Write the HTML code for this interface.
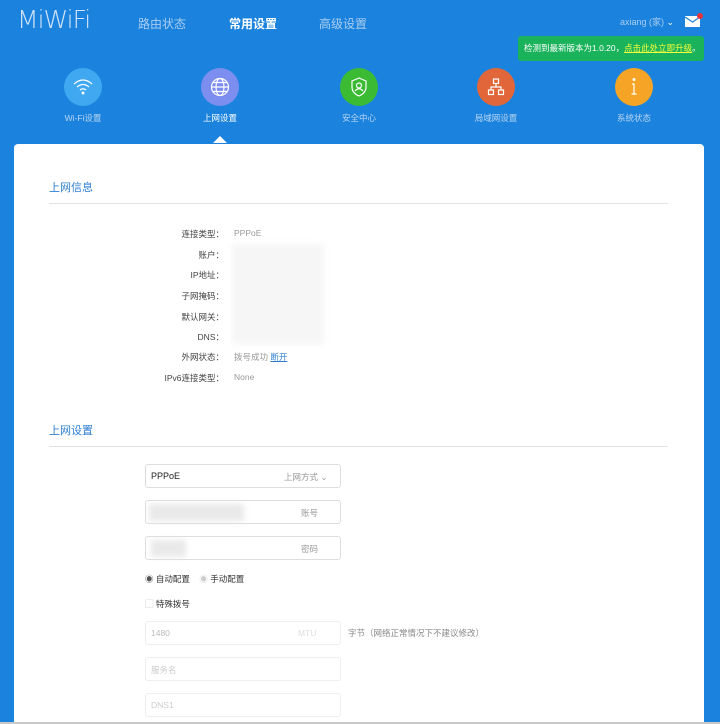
<!DOCTYPE html>
<html><head><meta charset="utf-8"><style>
*{margin:0;padding:0;box-sizing:border-box}
html,body{width:720px;height:724px;overflow:hidden}
body{background:#1b83de;font-family:"Liberation Sans","Noto Sans CJK SC",sans-serif;position:relative;font-size:9px}
.a{position:absolute;white-space:nowrap}
.logo{left:17px;top:5px;font-size:25px;color:#cfe3f7;letter-spacing:-1px;font-family:"DejaVu Sans","Liberation Sans",sans-serif;font-weight:200}
.nav{top:15px;font-size:12px;color:#a9cdef}
.ic{width:38px;height:38px;border-radius:50%;top:68px}
.lb{top:112px;font-size:8.5px;color:#b8d6f3;width:100px;text-align:center}
.card{left:14px;top:144px;width:690px;height:578px;background:#fff;border-radius:4px 4px 0 0}
.h{font-size:11px;color:#2f7fd0}
.ln{height:1px;background:#e2e2e2;left:49px;width:619px}
.k{width:100px;text-align:right;left:124px;font-size:8.5px;color:#444}
.v{left:234px;font-size:8.5px;color:#999}
.blur{background:#f6f6f6;filter:blur(3px)}
.in{left:145px;width:196px;height:24px;border:1px solid #ddd;border-radius:3px;background:#fff}
.in2{border-color:#eee}
</style></head><body>
<div class="a logo">MiWiFi</div>
<div class="a nav" style="left:138px">路由状态</div>
<div class="a nav" style="left:229px;color:#fff;font-weight:bold">常用设置</div>
<div class="a nav" style="left:319px">高级设置</div>
<div class="a" style="left:620px;top:15px;font-size:9px;color:#a9cdef">axiang (家) <span style="color:#fff">⌄</span></div>
<svg class="a" style="left:684px;top:12px" width="20" height="16"><rect x="1" y="4" width="15" height="11" fill="#fff"/><path d="M1 5 L8.5 10 L16 5" stroke="#1b83de" fill="none" stroke-width="1.2"/><circle cx="16" cy="4" r="3" fill="#e5323a"/></svg>
<div class="a" style="left:518px;top:36px;width:186px;height:25px;background:#1ab35b;border-radius:3px;color:#fff;font-size:8.5px;line-height:25px;padding-left:6px">检测到最新版本为1.0.20，<span style="color:#f6ff3b;text-decoration:underline">点击此处立即升级</span>。</div>
<div class="a" style="left:688px;top:31px;width:0;height:0;border:5px solid transparent;border-bottom-color:#1ab35b"></div>

<div class="a ic" style="left:64px;background:#3fa8f0"></div>
<svg class="a" style="left:72px;top:77px" width="22" height="20" fill="none" stroke="#fff" stroke-width="1.3"><path d="M2 7 Q11 -1 20 7"/><path d="M5 10 Q11 5 17 10"/><path d="M8 13 Q11 10.5 14 13"/><circle cx="11" cy="16" r=".8" fill="#fff"/></svg>
<div class="a ic" style="left:201px;background:#7c8ef0"></div>
<svg class="a" style="left:209px;top:76px" width="22" height="22" fill="none" stroke="#fff" stroke-width="1.2"><circle cx="11" cy="11" r="8.5"/><ellipse cx="11" cy="11" rx="4" ry="8.5"/><path d="M2.5 11H19.5M4 6.5H18M4 15.5H18"/></svg>
<div class="a ic" style="left:340px;background:#3bbb34"></div>
<svg class="a" style="left:349px;top:76px" width="20" height="22" fill="none" stroke="#fff" stroke-width="1.2"><path d="M10 2 L17 5 V11 Q17 17 10 20 Q3 17 3 11 V5 Z"/><circle cx="10" cy="9.5" r="2.5"/><path d="M6 15 Q10 10.5 14 15"/></svg>
<div class="a ic" style="left:477px;background:#e1673a"></div>
<svg class="a" style="left:486px;top:77px" width="20" height="20" fill="none" stroke="#fff" stroke-width="1.2"><rect x="7.5" y="2" width="5" height="4.5"/><rect x="2.5" y="13" width="5" height="4.5"/><rect x="12.5" y="13" width="5" height="4.5"/><path d="M10 6.5V10M5 13V10H15V13"/></svg>
<div class="a ic" style="left:615px;background:#f5a425"></div>
<svg class="a" style="left:624px;top:76px" width="20" height="22" fill="none" stroke="#fff" stroke-width="1.2"><circle cx="10" cy="3.5" r=".9" fill="#fff"/><path d="M8 8H10V18M7.5 18H12.5"/></svg>

<div class="a lb" style="left:33px">Wi-Fi设置</div>
<div class="a lb" style="left:170px;color:#fff">上网设置</div>
<div class="a lb" style="left:309px">安全中心</div>
<div class="a lb" style="left:446px">局域网设置</div>
<div class="a lb" style="left:584px">系统状态</div>

<div class="a card"></div>
<div class="a" style="left:213px;top:136px;border:7px solid transparent;border-bottom-color:#fff;border-top:0"></div>

<div class="a h" style="left:49px;top:179px">上网信息</div>
<div class="a ln" style="top:203px"></div>
<div class="a k" style="top:228px">连接类型：</div><div class="a v" style="top:228px">PPPoE</div>
<div class="a k" style="top:249px">账户：</div>
<div class="a k" style="top:269px">IP地址：</div>
<div class="a k" style="top:290px">子网掩码：</div>
<div class="a k" style="top:311px">默认网关：</div>
<div class="a k" style="top:331px">DNS：</div>
<div class="a blur" style="left:232px;top:244px;width:92px;height:100px"></div>
<div class="a k" style="top:351px">外网状态：</div><div class="a v" style="top:351px">拨号成功 <span style="color:#2f7fd0;text-decoration:underline">断开</span></div>
<div class="a k" style="top:372px">IPv6连接类型：</div><div class="a v" style="top:372px">None</div>

<div class="a h" style="left:49px;top:422px">上网设置</div>
<div class="a ln" style="top:446px"></div>

<div class="a in" style="top:464px"><span class="a" style="left:5px;top:6px;font-size:9px;color:#222">PPPoE</span><span class="a" style="left:138px;top:6px;font-size:8.5px;color:#999">上网方式 ⌄</span></div>
<div class="a in" style="top:500px"><div class="a blur" style="left:3px;top:3px;width:95px;height:17px;background:#e9e9e9"></div><span class="a" style="left:155px;top:6px;font-size:8.5px;color:#999">账号</span></div>
<div class="a in" style="top:536px"><div class="a blur" style="left:5px;top:3px;width:35px;height:17px;background:#e9e9e9"></div><span class="a" style="left:155px;top:6px;font-size:8.5px;color:#999">密码</span></div>
<div class="a" style="left:145px;top:573px;font-size:8.5px;color:#333"><span style="color:#555">◉</span> 自动配置 &nbsp;&nbsp;&nbsp;<span style="color:#ccc">◉</span> 手动配置</div>
<div class="a" style="left:145px;top:598px;font-size:8.5px;color:#333"><span style="color:#bbb">▢</span> 特殊拨号</div>
<div class="a in in2" style="top:621px"><span class="a" style="left:5px;top:6px;font-size:8.5px;color:#bbb">1480</span><span class="a" style="left:152px;top:6px;font-size:8.5px;color:#ddd">MTU</span></div>
<div class="a" style="left:348px;top:627px;font-size:8.5px;color:#888">字节（网络正常情况下不建议修改）</div>
<div class="a in in2" style="top:657px"><span class="a" style="left:5px;top:6px;font-size:8.5px;color:#ccc">服务名</span></div>
<div class="a in in2" style="top:693px"><span class="a" style="left:5px;top:6px;font-size:8.5px;color:#ccc">DNS1</span></div>
<div class="a" style="left:0;top:722px;width:720px;height:2px;background:#c8c8c8"></div>
</body></html>
